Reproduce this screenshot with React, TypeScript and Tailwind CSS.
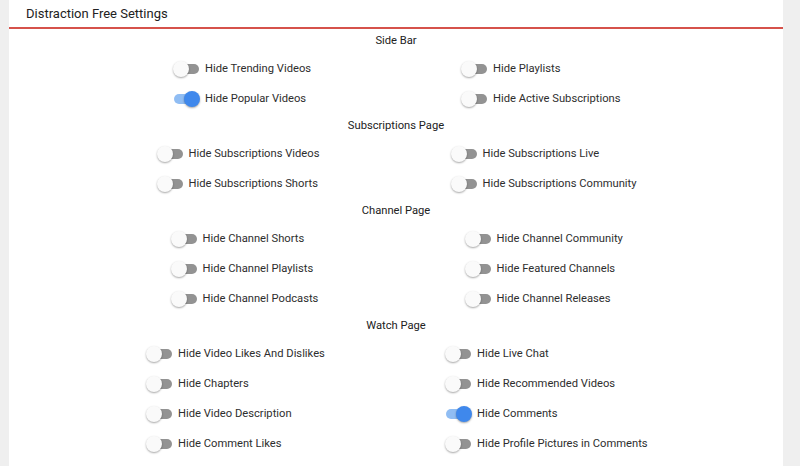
import React from "react";

type Item = { label: string; on?: boolean };
type Section = { title: string; cols: string; left: Item[]; right: Item[] };

const sections: Section[] = [
  {
    title: "Side Bar",
    cols: "grid-cols-[288px_158px]",
    left: [{ label: "Hide Trending Videos" }, { label: "Hide Popular Videos", on: true }],
    right: [{ label: "Hide Playlists" }, { label: "Hide Active Subscriptions" }],
  },
  {
    title: "Subscriptions Page",
    cols: "grid-cols-[294px_185px]",
    left: [{ label: "Hide Subscriptions Videos" }, { label: "Hide Subscriptions Shorts" }],
    right: [{ label: "Hide Subscriptions Live" }, { label: "Hide Subscriptions Community" }],
  },
  {
    title: "Channel Page",
    cols: "grid-cols-[294px_157px]",
    left: [
      { label: "Hide Channel Shorts" },
      { label: "Hide Channel Playlists" },
      { label: "Hide Channel Podcasts" },
    ],
    right: [
      { label: "Hide Channel Community" },
      { label: "Hide Featured Channels" },
      { label: "Hide Channel Releases" },
    ],
  },
  {
    title: "Watch Page",
    cols: "grid-cols-[299px_201px]",
    left: [
      { label: "Hide Video Likes And Dislikes" },
      { label: "Hide Chapters" },
      { label: "Hide Video Description" },
      { label: "Hide Comment Likes" },
    ],
    right: [
      { label: "Hide Live Chat" },
      { label: "Hide Recommended Videos" },
      { label: "Hide Comments", on: true },
      { label: "Hide Profile Pictures in Comments" },
    ],
  },
  {
    title: "Shorts Page",
    cols: "grid-cols-[290px_180px]",
    left: [{ label: "Hide Shorts Comments" }],
    right: [{ label: "Hide Shorts Likes" }],
  },
];

function Toggle({ on }: { on?: boolean }) {
  return (
    <span className="relative inline-block w-[26px] h-4 shrink-0">
      <span
        className={
          on
            ? "absolute left-[1px] right-0 top-[3px] h-[10px] rounded-full bg-[#90bdf3]"
            : "absolute left-[3px] right-0 top-[3px] h-[10px] rounded-full bg-[#939393]"
        }
      />
      <span
        className={
          on
            ? "absolute right-[-1px] top-0 w-4 h-4 rounded-full bg-[#3f88ec] shadow-[0_1px_2px_rgba(0,0,0,0.35)]"
            : "absolute left-0 top-0 w-4 h-4 rounded-full bg-[#fafafa] shadow-[0_1px_2px_rgba(0,0,0,0.35)]"
        }
      />
    </span>
  );
}

function Row({ item }: { item: Item }) {
  return (
    <div className="h-[30px] shrink-0 flex items-center gap-[6px]">
      <Toggle on={item.on} />
      <span className="text-[11.2px] text-[#2e2e2e] whitespace-nowrap">{item.label}</span>
    </div>
  );
}

export default function App() {
  return (
    <div
      className="w-[800px] h-[466px] overflow-hidden bg-[#efefef] flex items-start"
      style={{ fontFamily: "Roboto, 'Noto Sans', Arial, sans-serif" }}
    >
      <div className="ml-[9px] w-[774px] min-h-[466px] bg-white flex flex-col shrink-0">
        <div className="h-[29px] shrink-0 flex items-center px-[17px] border-b-2 border-[#d6524b]">
          <span className="text-[13px] text-[#222]">Distraction Free Settings</span>
        </div>
        <div className="flex flex-col shrink-0">
          {sections.map((s) => (
            <div key={s.title} className="flex flex-col items-center shrink-0">
              <div className="h-[25px] shrink-0 flex items-center text-[11.2px] text-[#222]">
                {s.title}
              </div>
              <div className={"grid shrink-0 " + s.cols}>
                <div className="flex flex-col">
                  {s.left.map((it) => (
                    <Row key={it.label} item={it} />
                  ))}
                </div>
                <div className="flex flex-col">
                  {s.right.map((it) => (
                    <Row key={it.label} item={it} />
                  ))}
                </div>
              </div>
            </div>
          ))}
        </div>
      </div>
    </div>
  );
}
